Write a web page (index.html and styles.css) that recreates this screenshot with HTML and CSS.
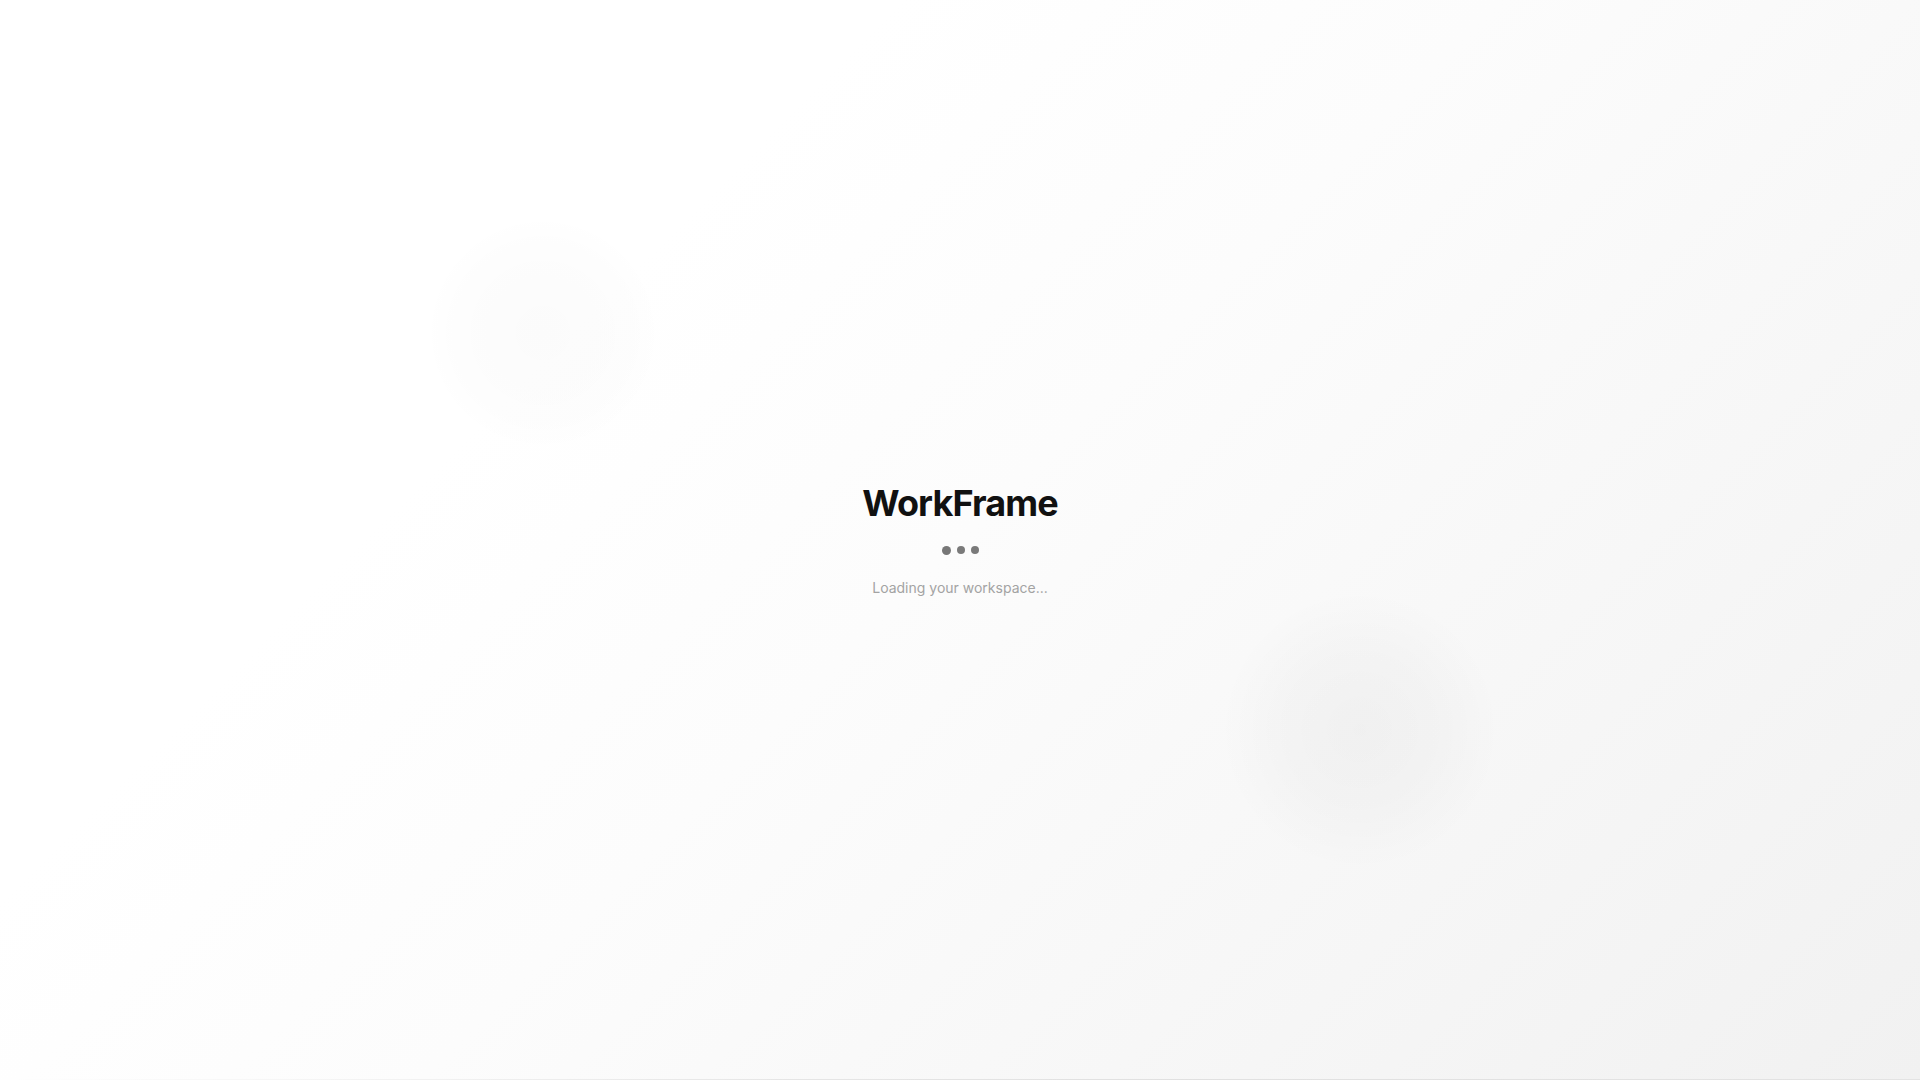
FILE: index.html
```html
<!DOCTYPE html>
<html lang="en">
<head>
<meta charset="utf-8">
<title>WorkFrame</title>
<link rel="stylesheet" href="styles.css">
</head>
<body>
<div class="screen">
  <main class="loader">
    <h1 class="brand">WorkFrame</h1>
    <div class="dots">
      <span class="dot dot-a"></span>
      <span class="dot"></span>
      <span class="dot"></span>
    </div>
    <p class="status">Loading your workspace...</p>
  </main>
  <div class="track"></div>
</div>
</body>
</html>
```

FILE: styles.css
```css
html, body {
  margin: 0;
  padding: 0;
  height: 100%;
}
body {
  font-family: Inter, "Noto Sans", "Liberation Sans", sans-serif;
  background:
    radial-gradient(circle at 543px 333px, rgba(0,0,0,0.014) 0, rgba(0,0,0,0.011) 55px, rgba(0,0,0,0.006) 90px, rgba(0,0,0,0) 118px),
    radial-gradient(circle at 1360px 730px, rgba(0,0,0,0.03) 0, rgba(0,0,0,0.02) 75px, rgba(0,0,0,0.009) 115px, rgba(0,0,0,0) 140px),
    linear-gradient(135deg, #ffffff 0%, #ffffff 30%, #fcfcfc 50%, #f1f1f1 100%);
  overflow: hidden;
}
.screen {
  height: 100vh;
  display: flex;
  flex-direction: column;
}
.loader {
  flex: 1;
  display: flex;
  flex-direction: column;
  align-items: center;
  justify-content: center;
}
.brand {
  margin: 0 0 21px;
  font-size: 36px;
  line-height: 44px;
  font-weight: 700;
  letter-spacing: -0.025em;
  color: #111111;
}
.dots {
  display: flex;
  gap: 6px;
  height: 8px;
  align-items: center;
}
.dot {
  width: 8px;
  height: 8px;
  border-radius: 50%;
  background: #7a7a7a;
}
.dot-a {
  width: 9px;
  height: 9px;
  background: #777777;
}
.status {
  margin: 24px 0 0;
  font-size: 14px;
  line-height: 20px;
  color: #a3a3a3;
}
.track {
  height: 1px;
  background: linear-gradient(90deg, rgba(0,0,0,0) 0%, rgba(0,0,0,0.08) 40%, rgba(0,0,0,0.09) 60%, rgba(0,0,0,0.06) 100%);
}
```
